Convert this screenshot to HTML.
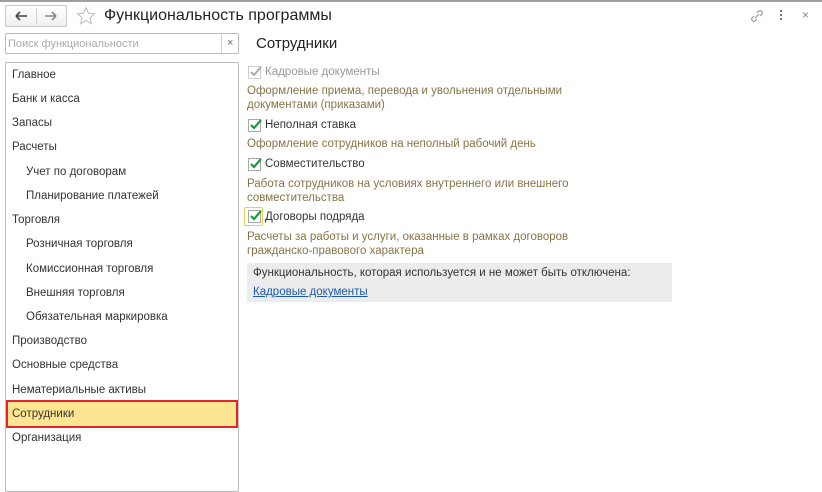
<!DOCTYPE html>
<html><head><meta charset="utf-8"><style>
*{margin:0;padding:0;box-sizing:border-box}
body{width:822px;height:481px;background:#fff;position:relative;overflow:hidden;font-family:"Liberation Sans",Arial,sans-serif;font-size:11.5px;color:#333}
.a{position:absolute;white-space:nowrap}
.it{position:absolute;left:12px;line-height:14px}
.sub{left:26px}
.cb{position:absolute;left:248px;width:13px;height:13px;border:1px solid #a8a8a8;background:#fff}
.cb svg{position:absolute;left:0;top:-2px}
.d{position:absolute;left:247px;color:#857447;line-height:14px}
</style></head><body>
<div class="a" style="left:0;top:0;width:822px;height:2px;background:#a0a0a0"></div>
<div class="a" style="left:5px;top:5px;width:62px;height:22px;border:1px solid #c8c8c8;border-radius:2px;background:linear-gradient(#fff,#f0f0f0)"></div>
<div class="a" style="left:36px;top:8px;width:1px;height:16px;background:#d0d0d0"></div>
<svg class="a" style="left:12px;top:9px" width="50" height="14"><path d="M4 7h11M4 7l4-4M4 7l4 4" stroke="#444" stroke-width="1.6" fill="none"/><path d="M33 7h11M44 7l-4-4M44 7l-4 4" stroke="#888" stroke-width="1.6" fill="none"/></svg>
<svg class="a" style="left:76px;top:6px" width="20" height="20"><path d="M10 1.5l2.5 5.6 6 .6-4.5 4 1.3 6-5.3-3.1-5.3 3.1 1.3-6-4.5-4 6-.6z" fill="none" stroke="#bbb" stroke-width="1"/></svg>
<div class="a" style="left:104px;top:7px;font-size:16px;color:#222">Функциональность программы</div>
<svg class="a" style="left:749px;top:8px" width="16" height="16"><path d="M6 10l4-4M5 8l-2 2a2.2 2.2 0 003 3l2-2M11 8l2-2a2.2 2.2 0 00-3-3L8 5" stroke="#999" fill="none" stroke-width="1.2"/></svg>
<div class="a" style="left:780px;top:10px;width:2px;height:2px;background:#777;box-shadow:0 4px #777,0 8px #777"></div>
<div class="a" style="left:802px;top:8px;color:#888;font-size:12px">×</div>
<div class="a" style="left:5px;top:33px;width:234px;height:21px;border:1px solid #bdbdbd;border-radius:2px"></div>
<div class="a" style="left:221px;top:34px;width:1px;height:19px;background:#d0d0d0"></div>
<div class="a" style="left:8px;top:38px;color:#aaa;font-size:11px">Поиск функциональности</div>
<div class="a" style="left:227px;top:37px;color:#666;font-size:11px">×</div>
<div class="a" style="left:5px;top:62px;width:234px;height:430px;border:1px solid #bdbdbd;border-radius:2px"></div>
<div class="a" style="left:6px;top:400px;width:232px;height:28px;background:#fee591;border:2px solid #e8232a"></div>
<div class="it" style="top:68px">Главное</div>
<div class="it" style="top:92px">Банк и касса</div>
<div class="it" style="top:116px">Запасы</div>
<div class="it" style="top:140px">Расчеты</div>
<div class="it sub" style="top:165px">Учет по договорам</div>
<div class="it sub" style="top:189px">Планирование платежей</div>
<div class="it" style="top:213px">Торговля</div>
<div class="it sub" style="top:237px">Розничная торговля</div>
<div class="it sub" style="top:262px">Комиссионная торговля</div>
<div class="it sub" style="top:286px">Внешняя торговля</div>
<div class="it sub" style="top:310px">Обязательная маркировка</div>
<div class="it" style="top:334px">Производство</div>
<div class="it" style="top:358px">Основные средства</div>
<div class="it" style="top:383px">Нематериальные активы</div>
<div class="it" style="top:407px">Сотрудники</div>
<div class="it" style="top:431px">Организация</div>
<div class="a" style="left:256px;top:35px;font-size:15px;color:#222">Сотрудники</div>
<div class="cb" style="top:66px;border-color:#ccc"><svg width="14" height="14"><path d="M2 7l3 3 7-8" stroke="#aaa" stroke-width="2" fill="none"/></svg></div>
<div class="a" style="left:265px;top:66px;color:#999">Кадровые документы</div>
<div class="d" style="top:84px">Оформление приема, перевода и увольнения отдельными<br>документами (приказами)</div>
<div class="cb" style="top:119px"><svg width="14" height="14"><path d="M2 7l3 3 7-8" stroke="#1a9b3c" stroke-width="2.2" fill="none"/></svg></div>
<div class="a" style="left:265px;top:119px">Неполная ставка</div>
<div class="d" style="top:137px">Оформление сотрудников на неполный рабочий день</div>
<div class="cb" style="top:158px"><svg width="14" height="14"><path d="M2 7l3 3 7-8" stroke="#1a9b3c" stroke-width="2.2" fill="none"/></svg></div>
<div class="a" style="left:265px;top:158px">Совместительство</div>
<div class="d" style="top:177px">Работа сотрудников на условиях внутреннего или внешнего<br>совместительства</div>
<div class="a" style="left:244px;top:207px;width:19px;height:19px;border:1px solid #f2c94c;border-radius:2px"></div>
<div class="cb" style="top:210px"><svg width="14" height="14"><path d="M2 7l3 3 7-8" stroke="#1a9b3c" stroke-width="2.2" fill="none"/></svg></div>
<div class="a" style="left:265px;top:211px">Договоры подряда</div>
<div class="d" style="top:230px">Расчеты за работы и услуги, оказанные в рамках договоров<br>гражданско-правового характера</div>
<div class="a" style="left:247px;top:263px;width:425px;height:39px;background:#ececec"></div>
<div class="a" style="left:253px;top:267px">Функциональность, которая используется и не может быть отключена:</div>
<div class="a" style="left:253px;top:286px;color:#1c5aad;text-decoration:underline">Кадровые документы</div>
</body></html>
